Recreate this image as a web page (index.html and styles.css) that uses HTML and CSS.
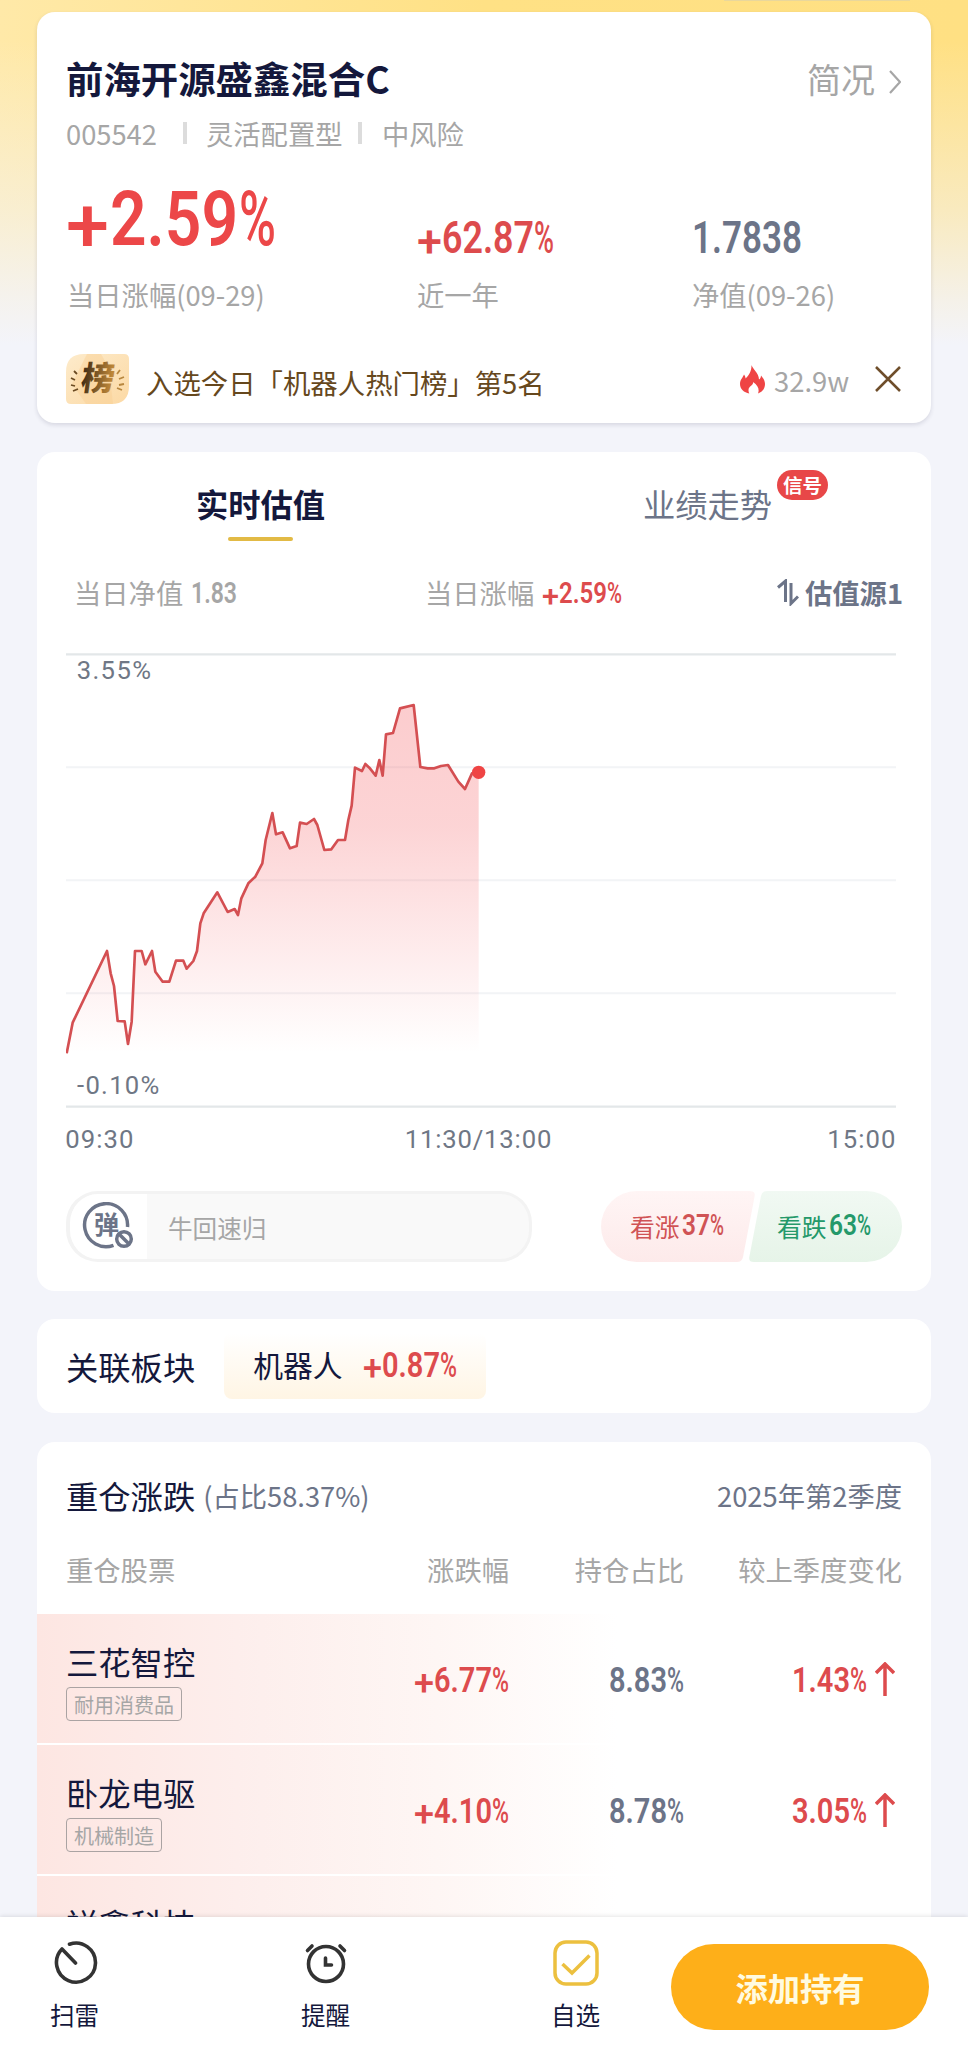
FILE: index.html
```html
<!DOCTYPE html>
<html lang="zh-CN">
<head>
    <meta charset="UTF-8">
    <meta name="viewport" content="width=device-width, initial-scale=1.0">
    <title>前海开源盛鑫混合C</title>
    <link rel="stylesheet" href="styles.css">
</head>
<body>
<div class="page">
    <div class="top-strip"></div>

    <!-- Fund summary -->
    <section class="card summary">
        <div class="title-row">
            <h1>前海开源盛鑫混合C</h1>
            <a class="more">简况
                <svg width="12" height="24" viewBox="0 0 12 24"><path d="M1 1l10 11L1 23" fill="none" stroke="#a6a6a6" stroke-width="2.2"/></svg>
            </a>
        </div>
        <div class="meta"><span class="code">005542</span><i></i><span class="type">灵活配置型</span><i></i><span class="risk">中风险</span></div>
        <div class="stats">
            <div class="stat">
                <div class="value big"><svg class="num xl up" width="208" height="54"><text><tspan class="s" x="-1" y="61" textLength="43" lengthAdjust="spacingAndGlyphs">+</tspan><tspan x="43" y="54" textLength="128" lengthAdjust="spacingAndGlyphs">2.59</tspan><tspan class="s" x="172" y="54" textLength="37" lengthAdjust="spacingAndGlyphs">%</tspan></text></svg></div>
                <div class="label">当日涨幅(09-29)</div>
            </div>
            <div class="stat">
                <div class="value"><svg class="num lg up" width="137" height="31"><text><tspan class="s" x="0" y="35" textLength="25" lengthAdjust="spacingAndGlyphs">+</tspan><tspan x="25" y="31" textLength="92" lengthAdjust="spacingAndGlyphs">62.87</tspan><tspan class="s" x="117" y="31" textLength="20" lengthAdjust="spacingAndGlyphs">%</tspan></text></svg></div>
                <div class="label">近一年</div>
            </div>
            <div class="stat">
                <div class="value"><svg class="num lg flat" width="110" height="31"><text y="31" textLength="110" lengthAdjust="spacingAndGlyphs">1.7838</text></svg></div>
                <div class="label">净值(09-26)</div>
            </div>
        </div>
        <div class="rank">
            <svg class="rank-icon" width="63" height="50" viewBox="0 0 63 50">
                <defs>
                    <linearGradient id="bang" x1="0" y1="0" x2="1" y2="0"><stop offset="0" stop-color="#3f2b14"/><stop offset="1" stop-color="#c98f3c"/></linearGradient>
                    <linearGradient id="bangBg" x1="0" y1="0" x2="1" y2="1"><stop offset="0" stop-color="#fdebcb"/><stop offset="1" stop-color="#fcd9a4"/></linearGradient>
                </defs>
                <path d="M18 0H58Q63 0 63 5V32Q63 50 45 50H5Q0 50 0 45V18Q0 0 18 0Z" fill="url(#bangBg)"/>
                <path d="M21 0h14l8 14 4 36H20L6 30Z" fill="#f9cf92" opacity=".45"/>
                <text class="bang" x="19" y="36" transform="skewX(-8)" fill="url(#bang)">榜</text>
                <g fill="none" stroke="#6b4b22" stroke-width="1.8"><path d="M8 17l3 3M5 24l4 2M5 31l4 1M7 37l5-2"/><path stroke="#b8873f" d="M54 16l-3 4M58 23l-5 2M58 30l-5 1M56 36l-5-2"/></g>
            </svg>
            <span class="rank-text">入选今日「机器人热门榜」第5名</span>
            <svg class="fire" width="25" height="29" viewBox="0 0 25 29"><path d="M11.500 0C12.200 3.500 19 8 19 14.500C20.500 13.500 21 12 21 10.500C23.500 13.500 25 16 25 19C25 23.500 22.500 27 18 28.500C19.500 25 18.500 20.500 13 17C14 20 8.500 21 8.500 25C8.500 26.500 8.800 27.500 9.300 28.600C4 27.500 0 24 0 19C0 14.500 3 12.500 4 9.500C5 11 5.500 12 5.600 13.500C9 10.500 11.700 6 11.500 0Z" fill="#ef4444"/></svg>
            <span class="heat">32.9w</span>
            <svg class="close" width="26" height="26" viewBox="0 0 26 26"><path d="M1 1l24 24M25 1L1 25" stroke="#6f4e2b" stroke-width="2.5"/></svg>
        </div>
    </section>

    <!-- Realtime valuation chart -->
    <section class="card valuation">
        <div class="tabs">
            <div class="tab active"><span>实时估值</span></div>
            <div class="tab"><span>业绩走势<b class="badge">信号</b></span></div>
        </div>
        <div class="info">
            <div class="info-item">当日净值<svg class="num sm grey" width="46" height="20"><text y="20" textLength="46" lengthAdjust="spacingAndGlyphs">1.83</text></svg></div>
            <div class="info-item">当日涨幅<svg class="num sm up" width="80" height="20"><text><tspan class="s" x="0" y="23" textLength="17" lengthAdjust="spacingAndGlyphs">+</tspan><tspan x="17" y="20" textLength="48" lengthAdjust="spacingAndGlyphs">2.59</tspan><tspan class="s" x="65" y="20" textLength="15" lengthAdjust="spacingAndGlyphs">%</tspan></text></svg></div>
            <div class="source">
                <svg width="22" height="27" viewBox="0 0 22 27"><path d="M1 8.500L8.500 2V23M14 4V24.500L21 17.500" fill="none" stroke="#6c7488" stroke-width="3"/></svg>
                估值源1
            </div>
        </div>
        <svg class="chart" width="830" height="520" viewBox="0 0 2490 1560">
            <defs>
                <linearGradient id="area" gradientUnits="userSpaceOnUse" x1="0" y1="190" x2="0" y2="1240">
                    <stop offset="0" stop-color="#f44b50" stop-opacity=".28"/>
                    <stop offset=".35" stop-color="#f44b50" stop-opacity=".24"/>
                    <stop offset="1" stop-color="#f44b50" stop-opacity="0"/>
                </linearGradient>
            </defs>
            <g stroke="#f2f4f6" stroke-width="6"><path d="M0 382H2490M0 721H2490M0 1060H2490"/><path stroke="#e3e7e9" stroke-width="7" d="M0 43H2490M0 1400H2490"/></g>
            <path fill="url(#area)" d="M2 1240L20 1148L123 933L134 1000L144 1038L155 1143L176 1144L186 1212L197 1145L207 933H227L238 973L258 933L268 995L290 1025H310L330 962H352L362 986L382 963L393 933L403 850L413 820L454 757L485 816L506 807L516 825L526 775L547 730L568 710L589 670L599 600L619 519L630 583L650 577L672 625L692 618L702 548L722 552L744 537L754 555L775 630L796 628L816 600H837L847 540L857 497L867 383L888 393L898 372L910 383L929 407L940 360L950 407L960 283L981 279L1002 205L1043 195L1063 381L1085 385L1105 385L1125 378L1146 375L1177 425L1197 447L1218 400L1238 397V1240Z"/>
            <path fill="none" stroke="#d44f52" stroke-width="8" stroke-linejoin="round" d="M2 1240L20 1148L123 933L134 1000L144 1038L155 1143L176 1144L186 1212L197 1145L207 933H227L238 973L258 933L268 995L290 1025H310L330 962H352L362 986L382 963L393 933L403 850L413 820L454 757L485 816L506 807L516 825L526 775L547 730L568 710L589 670L599 600L619 519L630 583L650 577L672 625L692 618L702 548L722 552L744 537L754 555L775 630L796 628L816 600H837L847 540L857 497L867 383L888 393L898 372L910 383L929 407L940 360L950 407L960 283L981 279L1002 205L1043 195L1063 381L1085 385L1105 385L1125 378L1146 375L1177 425L1197 447L1218 400L1238 397"/>
            <circle cx="1238" cy="397" r="20" fill="#ef4444"/>
            <g class="axis">
                <text x="32" y="116" textLength="223">3.55%</text>
                <text x="33" y="1363" textLength="247">-0.10%</text>
                <text x="-2" y="1523" textLength="204">09:30</text>
                <text x="1016" y="1523" textLength="440">11:30/13:00</text>
                <text x="2284" y="1523" textLength="204">15:00</text>
            </g>
        </svg>
        <div class="actions">
            <div class="danmu">
                <div class="danmu-icon">
                    <svg width="52" height="48" viewBox="0 0 52 48">
                        <g fill="none" stroke="#6c7488" stroke-width="3.500"><path d="M31.500 43.300A21.500 21.500 0 1 1 45.500 25"/><circle cx="42" cy="37" r="7.300"/><path d="M37 32l10 10"/></g>
                        <text class="dan" x="12" y="31.500">弹</text>
                    </svg>
                </div>
                <span>牛回速归</span>
            </div>
            <div class="vote">
                <svg class="vote-bg" width="301" height="71" viewBox="0 0 301 71">
                    <defs>
                        <linearGradient id="bull" x1="0" y1="0" x2="0" y2="1"><stop offset="0" stop-color="#fff5f5"/><stop offset="1" stop-color="#fdeaea"/></linearGradient>
                        <linearGradient id="bear" x1="0" y1="0" x2="0" y2="1"><stop offset="0" stop-color="#f1f9f3"/><stop offset="1" stop-color="#e6f4e8"/></linearGradient>
                    </defs>
                    <path d="M35.500 0H149Q155 0 153.500 6L142 66Q141 71 136 71H35.500A35.500 35.500 0 0 1 35.500 0Z" fill="url(#bull)"/>
                    <path d="M166 0H265.500A35.500 35.500 0 0 1 265.500 71H153Q147 71 148.500 65L160 5Q161 0 166 0Z" fill="url(#bear)"/>
                </svg>
                <div class="bull">看涨<svg class="num sm" width="42" height="21"><text><tspan x="0" y="21" textLength="28" lengthAdjust="spacingAndGlyphs">37</tspan><tspan class="s" x="28" y="21" textLength="14" lengthAdjust="spacingAndGlyphs">%</tspan></text></svg></div>
                <div class="bear">看跌<svg class="num sm" width="42" height="21"><text><tspan x="0" y="21" textLength="28" lengthAdjust="spacingAndGlyphs">63</tspan><tspan class="s" x="28" y="21" textLength="14" lengthAdjust="spacingAndGlyphs">%</tspan></text></svg></div>
            </div>
        </div>
    </section>

    <!-- Related sector -->
    <section class="card sector">
        <span class="sector-title">关联板块</span>
        <div class="chip">机器人<svg class="num md up" width="94" height="25"><text><tspan class="s" x="0" y="28" textLength="19" lengthAdjust="spacingAndGlyphs">+</tspan><tspan x="19" y="25" textLength="58" lengthAdjust="spacingAndGlyphs">0.87</tspan><tspan class="s" x="77" y="25" textLength="17" lengthAdjust="spacingAndGlyphs">%</tspan></text></svg></div>
    </section>

    <!-- Holdings -->
    <section class="card holdings">
        <div class="holdings-head">
            <h2>重仓涨跌</h2><span class="ratio">(占比58.37%)</span>
            <span class="quarter">2025年第2季度</span>
        </div>
        <div class="row head"><span>重仓股票</span><span>涨跌幅</span><span>持仓占比</span><span>较上季度变化</span></div>
        <div class="row item">
            <div class="stock"><div class="name">三花智控</div><div class="tag">耐用消费品</div></div>
            <div><svg class="num md up" width="95" height="25"><text><tspan class="s" x="0" y="28" textLength="20" lengthAdjust="spacingAndGlyphs">+</tspan><tspan x="20" y="25" textLength="58" lengthAdjust="spacingAndGlyphs">6.77</tspan><tspan class="s" x="78" y="25" textLength="17" lengthAdjust="spacingAndGlyphs">%</tspan></text></svg></div>
            <div><svg class="num md flat" width="75" height="25"><text><tspan x="0" y="25" textLength="58" lengthAdjust="spacingAndGlyphs">8.83</tspan><tspan class="s" x="58" y="25" textLength="17" lengthAdjust="spacingAndGlyphs">%</tspan></text></svg></div>
            <div class="change"><svg class="num md up" width="75" height="25"><text><tspan x="0" y="25" textLength="58" lengthAdjust="spacingAndGlyphs">1.43</tspan><tspan class="s" x="58" y="25" textLength="17" lengthAdjust="spacingAndGlyphs">%</tspan></text></svg><svg class="arrow" width="20" height="34" viewBox="0 0 20 34"><path d="M10 34V2M1 11l9-9 9 9" fill="none" stroke="#dd4b4d" stroke-width="3.500"/></svg></div>
        </div>
        <div class="row item">
            <div class="stock"><div class="name">卧龙电驱</div><div class="tag">机械制造</div></div>
            <div><svg class="num md up" width="95" height="25"><text><tspan class="s" x="0" y="28" textLength="20" lengthAdjust="spacingAndGlyphs">+</tspan><tspan x="20" y="25" textLength="58" lengthAdjust="spacingAndGlyphs">4.10</tspan><tspan class="s" x="78" y="25" textLength="17" lengthAdjust="spacingAndGlyphs">%</tspan></text></svg></div>
            <div><svg class="num md flat" width="75" height="25"><text><tspan x="0" y="25" textLength="58" lengthAdjust="spacingAndGlyphs">8.78</tspan><tspan class="s" x="58" y="25" textLength="17" lengthAdjust="spacingAndGlyphs">%</tspan></text></svg></div>
            <div class="change"><svg class="num md up" width="75" height="25"><text><tspan x="0" y="25" textLength="58" lengthAdjust="spacingAndGlyphs">3.05</tspan><tspan class="s" x="58" y="25" textLength="17" lengthAdjust="spacingAndGlyphs">%</tspan></text></svg><svg class="arrow" width="20" height="34" viewBox="0 0 20 34"><path d="M10 34V2M1 11l9-9 9 9" fill="none" stroke="#dd4b4d" stroke-width="3.500"/></svg></div>
        </div>
        <div class="row item">
            <div class="stock"><div class="name">祥鑫科技</div></div>
        </div>
    </section>

    <!-- Bottom bar -->
    <nav class="bottom-bar">
        <div class="nav-item">
            <svg width="46" height="46" viewBox="0 0 46 46"><path d="M17.500 4.200A19.500 19.500 0 1 1 10 9L23.500 23" fill="none" stroke="#333" stroke-width="3.600" stroke-linecap="round" stroke-linejoin="round"/></svg>
            <span>扫雷</span>
        </div>
        <div class="nav-item">
            <svg width="46" height="46" viewBox="0 0 46 46"><g fill="none" stroke="#333" stroke-width="3.600" stroke-linecap="round"><circle cx="23" cy="24" r="17.500"/><path d="M22.500 18v7h6M4.500 10.500l4.500-4.500M37 6l4.500 4.500"/></g></svg>
            <span>提醒</span>
        </div>
        <div class="nav-item">
            <svg width="46" height="46" viewBox="0 0 46 46"><g fill="none" stroke="#ecc03f" stroke-width="3.500"><rect x="2" y="2" width="42" height="42" rx="11"/><path d="M9.500 24l9.500 9L36.500 15.500"/></g></svg>
            <span>自选</span>
        </div>
        <button class="add">添加持有</button>
    </nav>
</div>
</body>
</html>
```
FILE: styles.css
```css
/* General Reset */
* {
    box-sizing: border-box;
    margin: 0;
    padding: 0;
}

body {
    font-family: "Noto Sans CJK SC", sans-serif;
    background-color: #f3f4fa;
    color: #14183c;
    overflow: hidden;
}

svg {
    display: block;
    flex-shrink: 0;
}

.page {
    position: relative;
    width: 968px;
    height: 2056px;
    padding: 0 37px;
    overflow: hidden;
    background:
        linear-gradient(to bottom, rgba(243, 244, 250, 0) 0, rgba(243, 244, 250, 0) 40px, rgba(243, 244, 250, .5) 210px, rgba(243, 244, 250, .85) 300px, #f3f4fa 345px),
        linear-gradient(to right, #ffe9a8, #ffe185 50%, #ffe083);
}

.top-strip {
    width: 186px;
    height: 1px;
    margin: 0 0 11px 687px;
    background: #e9d79c;
}

.card {
    background: #fff;
    border-radius: 18px;
}

/* Condensed figures */
.num {
    display: inline-block;
    overflow: visible;
    font-family: Roboto, sans-serif;
    font-weight: 600;
    fill: currentColor;
}
.num .s { font-weight: 500; }
.num.xl { font-size: 76px; }
.num.lg { font-size: 43.5px; }
.num.md { font-size: 35px; }
.num.sm { font-size: 29px; }
.up { color: #dd4b4d; }
.num.xl.up { color: #ec4748; }
.flat { color: #6c7488; }
.grey { color: #a6a6a6; }

/* Summary */
.summary {
    height: 411px;
    padding: 40px 30px 0 29px;
    box-shadow: 0 2px 4px rgba(40, 40, 80, .14);
}

.title-row {
    display: flex;
    justify-content: space-between;
    align-items: center;
    height: 53px;
}

h1 {
    font-size: 37.4px;
    font-weight: 700;
    line-height: 53px;
}

.more {
    display: flex;
    align-items: center;
    gap: 14px;
    font-size: 34px;
    line-height: 55px;
    color: #a6a6a6;
}
.more svg { margin-top: 6px; }

.meta {
    display: flex;
    align-items: center;
    height: 56px;
    margin-bottom: 2px;
    font-size: 27.3px;
    color: #a6a6a6;
}
.meta i {
    width: 4px;
    height: 22px;
    background: #dcdcdc;
}
.meta .code { width: 117px; }
.meta .type { margin-left: 19px; width: 152px; }
.meta .risk { margin-left: 20px; }

.stats {
    display: grid;
    grid-template-columns: 350px 275px 1fr;
    margin-left: 1px;
}
.value {
    display: flex;
    align-items: flex-end;
    height: 90px;
}
.value.big { padding-bottom: 8px; }
.label {
    font-size: 27.3px;
    line-height: 82px;
    color: #a6a6a6;
}

.rank {
    display: flex;
    align-items: center;
    height: 88px;
}
.rank-icon { overflow: visible; }
.bang {
    font-size: 33px;
    font-weight: 900;
}
.rank-text {
    margin: 6px 0 0 17px;
    font-size: 27.4px;
    color: #66481d;
}
.fire { margin-left: auto; }
.heat {
    width: 75px;
    margin: 1px 26px 0 9px;
    font-size: 27.4px;
    color: #a6a6a6;
}

/* Valuation */
.valuation {
    height: 839px;
    margin-top: 29px;
}

.tabs {
    display: flex;
    height: 102px;
}
.tab {
    flex: 1;
    text-align: center;
    font-size: 32.3px;
    line-height: 103px;
    color: #6c7488;
}
.tab span {
    position: relative;
    display: inline-block;
}
.tab.active {
    font-weight: 700;
    color: #14183c;
}
.tab.active span::after {
    content: "";
    position: absolute;
    left: 32px;
    top: 85px;
    width: 65px;
    height: 4px;
    border-radius: 2px;
    background: #e2ba45;
}
.badge {
    position: absolute;
    left: 134px;
    top: 18px;
    width: 51px;
    height: 30px;
    border-radius: 15px;
    background: #e84748;
    color: #fff;
    font-size: 19.5px;
    line-height: 29px;
}

.info {
    display: grid;
    grid-template-columns: 351px 1fr auto;
    align-items: center;
    height: 76px;
    padding: 0 28px 0 37px;
    font-size: 27.3px;
    color: #a6a6a6;
}
.info-item .num { margin-left: 8px; vertical-align: 1px; }
.source {
    display: flex;
    align-items: center;
    gap: 6px;
    font-weight: 700;
    color: #6c7488;
}

.chart {
    margin: 10px 0 0 29px;
}
.axis {
    font-family: Roboto, sans-serif;
    font-size: 77px;
    fill: #6f7785;
}

.actions {
    display: flex;
    justify-content: space-between;
    margin: 31px 29px 0;
}
.danmu {
    display: flex;
    align-items: center;
    width: 466px;
    height: 71px;
    border: 3px solid #f3f3f3;
    border-left-width: 4px;
    border-radius: 32px;
    background: #f9f9f9;
    font-size: 24.6px;
    color: #a6a6a6;
    overflow: hidden;
}
.danmu-icon {
    width: 77px;
    height: 65px;
    margin-right: 21px;
    padding: 8px 0 0 12px;
    background: #fff;
}
.dan {
    font-size: 25px;
    font-weight: 700;
    fill: #6c7488;
}

.vote {
    display: grid;
    grid-template-columns: 147px 1fr;
    align-items: center;
    width: 301px;
    font-size: 24.8px;
}
.vote-bg,
.bull,
.bear {
    grid-row: 1;
}
.vote-bg { grid-column: 1 / 3; }
.bull {
    grid-column: 1;
    padding: 0 0 1px 29px;
    color: #d05355;
}
.bear {
    grid-column: 2;
    padding: 0 0 1px 29px;
    color: #24996a;
}
.vote .num { margin-left: 2px; vertical-align: 2px; }

/* Sector */
.sector {
    display: flex;
    align-items: center;
    height: 94px;
    margin-top: 28px;
    padding-left: 29px;
}
.sector-title { font-size: 32.3px; }
.chip {
    width: 262px;
    height: 66px;
    margin-left: 29px;
    padding-left: 29px;
    border-radius: 8px;
    background: linear-gradient(to bottom, #fff, #fff5e4);
    font-size: 29.8px;
    line-height: 63px;
}
.chip .num { margin-left: 20px; }

/* Holdings */
.holdings {
    height: 640px;
    margin-top: 29px;
    overflow: hidden;
}
.holdings-head {
    display: flex;
    align-items: center;
    height: 106px;
    padding: 0 29px;
    font-size: 27.3px;
    color: #6c7488;
}
h2 {
    font-size: 32.3px;
    font-weight: 400;
    color: #14183c;
}
.ratio { margin-left: 8px; }
.quarter { margin-left: auto; }

.row {
    display: grid;
    grid-template-columns: 1fr 190px 175px 218px;
    align-items: center;
    padding: 0 29px;
    text-align: right;
}
.row > :first-child { text-align: left; }
.row.head {
    height: 66px;
    padding-bottom: 24px;
    font-size: 27.3px;
    line-height: 42px;
    color: #a6a6a6;
}
.row.item {
    height: 129px;
    margin-bottom: 2px;
    background: linear-gradient(to right, #fde6e2 0, #fdeeec 200px, #fef6f4 400px, #fff 580px);
}
.row.item .num { margin-top: 1px; vertical-align: middle; }
.stock {
    height: 129px;
    padding-top: 23px;
}
.name {
    font-size: 32.3px;
    line-height: 48px;
}
.tag {
    display: inline-block;
    height: 34px;
    margin: 2px 0 0;
    padding: 0 7px;
    border: 1px solid #aaa3a3;
    border-radius: 4px;
    font-size: 20px;
    line-height: 34px;
    color: #a6a6a6;
    vertical-align: top;
}
.change {
    display: flex;
    justify-content: flex-end;
    align-items: center;
    padding-right: 7px;
}
.arrow { margin-left: 8px; }

/* Bottom bar */
.bottom-bar {
    position: absolute;
    left: 0;
    bottom: 0;
    display: flex;
    width: 968px;
    height: 139px;
    padding: 22px 39px 0 12px;
    background: #fff;
    box-shadow: 0 -1px 4px rgba(0, 0, 0, .1);
}
.nav-item {
    display: flex;
    flex-direction: column;
    align-items: center;
    width: 125px;
    margin-right: 126px;
    font-size: 24.6px;
}
.nav-item svg { margin-top: 1px; }
.nav-item span {
    margin-top: 10px;
    line-height: 36px;
}
.nav-item:nth-child(3) {
    margin-left: -1px;
    margin-right: 33px;
}
.add {
    width: 258px;
    height: 86px;
    margin-top: 5px;
    border: none;
    border-radius: 43px;
    background: #feaf19;
    color: #fffbe0;
    font-family: inherit;
    font-size: 32.3px;
    font-weight: 700;
    line-height: 86px;
}
```
